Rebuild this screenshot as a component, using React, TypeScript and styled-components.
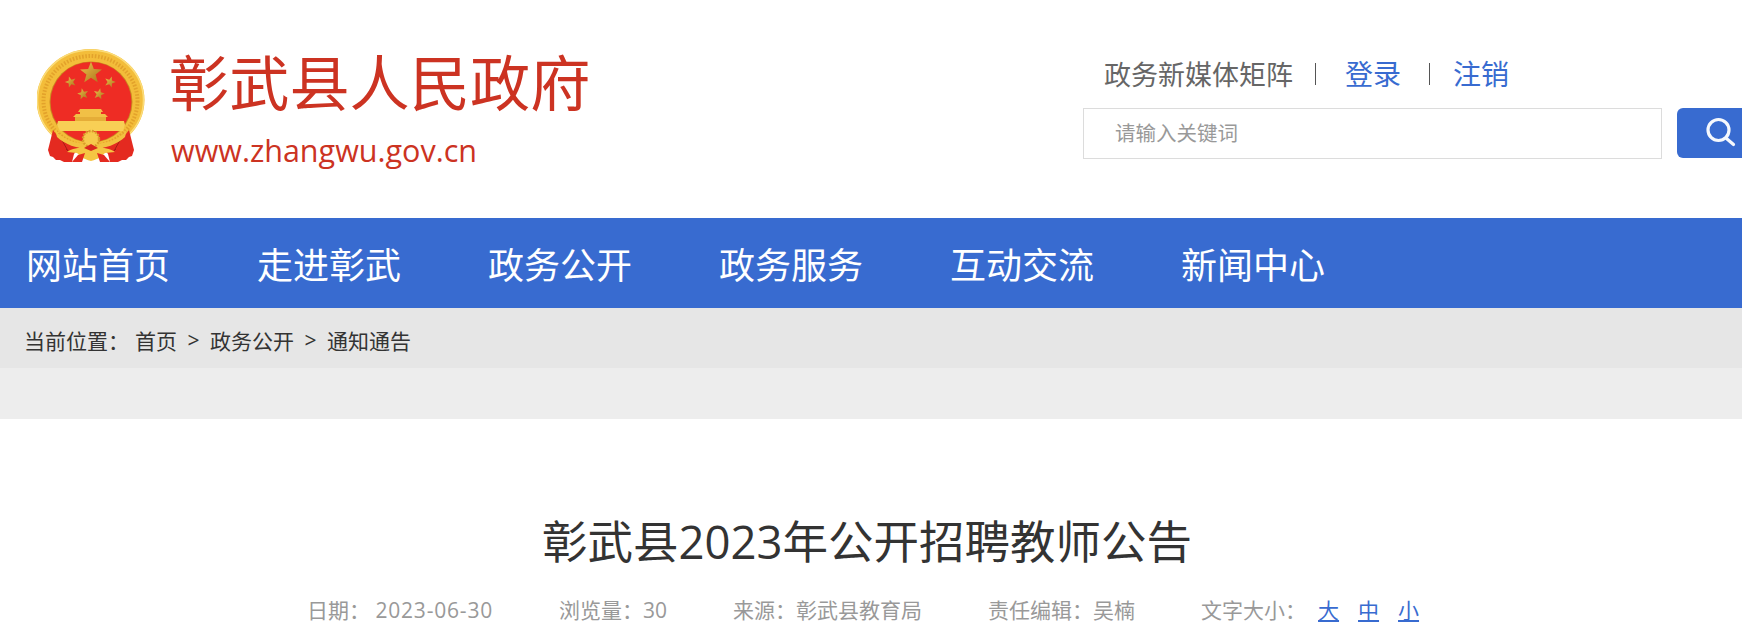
import React from 'react';
import styled, { createGlobalStyle } from 'styled-components';

const CJK = `"Open Sans", "Noto Sans CJK SC", sans-serif`;
const BLUE = '#386bd0';

const GlobalStyle = createGlobalStyle`
  html, body {
    margin: 0;
    padding: 0;
    height: 627px;
    overflow: hidden;
    background: #fff;
    font-family: ${CJK};
  }
`;

const Page = styled.div`
  width: 1742px;
  overflow: hidden;
`;

const Header = styled.header`
  display: flex;
  height: 218px;
`;

const Brand = styled.div`
  flex: 0 0 1083px;
  display: flex;
  align-items: flex-start;
  padding: 48px 0 0 37px;
  box-sizing: border-box;
`;

const Emblem = styled.svg`
  width: 110px;
  height: 116px;
  margin-top: 1px;
  flex: none;
  filter: blur(0.35px);
`;

const BrandText = styled.div`
  margin-left: 23px;
  color: #cc3322;
`;

const SiteName = styled.div`
  font-size: 60.2px;
  line-height: 70px;
  margin-left: -1px;
  white-space: nowrap;
`;

const SiteUrl = styled.div`
  font-size: 30.5px;
  line-height: 42px;
  margin: 11px 0 0 1px;
`;

const Tools = styled.div`
  flex: none;
  padding-top: 52px;
`;

const ToolLinks = styled.div`
  display: flex;
  align-items: center;
  height: 42px;
  padding-left: 21px;
  font-size: 27px;
`;

const ToolLabel = styled.span`
  color: #666;
  white-space: nowrap;
`;

const ToolLink = styled.a`
  color: ${BLUE};
  font-size: 28px;
  white-space: nowrap;
`;

const ToolSep = styled.i<{ $left: number; $right: number }>`
  display: block;
  width: 1px;
  height: 22px;
  margin: 2px ${(p) => p.$right}px 0 ${(p) => p.$left}px;
  background: #555;
`;

const SearchRow = styled.div`
  display: flex;
  margin-top: 14px;
`;

const SearchInput = styled.div`
  width: 579px;
  height: 51px;
  box-sizing: border-box;
  border: 1px solid #dcdcdc;
  padding-left: 31px;
  color: #999;
  font-size: 20.5px;
  line-height: 49px;
`;

const SearchButton = styled.div`
  width: 80px;
  height: 50px;
  margin-left: 15px;
  border-radius: 6px;
  background: ${BLUE};
  display: flex;
  align-items: center;
  padding-left: 28px;
  box-sizing: border-box;
`;

const NavBar = styled.nav`
  display: flex;
  height: 90px;
  align-items: center;
  padding-left: 26px;
  background: ${BLUE};
`;

const NavItem = styled.a`
  width: 231px;
  flex: none;
  color: #fff;
  font-size: 36px;
  white-space: nowrap;
`;

const Crumbs = styled.div`
  display: flex;
  align-items: center;
  height: 60px;
  padding: 3px 0 0 24px;
  box-sizing: border-box;
  background: #e6e6e6;
  color: #333;
  font-size: 21px;
  white-space: nowrap;
`;

const CrumbLabel = styled.span`
  margin-right: 6px;
`;

const CrumbArrow = styled.span`
  margin: 0 10.5px;
`;

const Band = styled.div`
  height: 51px;
  background: #ededed;
`;

const Title = styled.h1`
  margin: 0;
  padding: 90px 8px 0 0;
  text-align: center;
  color: #333;
  font-size: 45.5px;
  font-weight: 400;
  line-height: 64px;
`;

const Meta = styled.div`
  display: flex;
  justify-content: center;
  gap: 66px;
  margin-top: 22px;
  padding-right: 16px;
  color: #999;
  font-size: 21px;
  line-height: 30px;
  white-space: nowrap;
`;

const MetaDate = styled.span`
  letter-spacing: 0.8px;
`;

const SizeLinks = styled.span`
  display: inline-flex;
  gap: 19px;
  margin-left: 12px;
`;

const SizeLink = styled.a`
  color: ${BLUE};
  text-decoration: underline;
`;

const starPoints = (cx: number, cy: number, r: number, turn = 0) =>
  Array.from({ length: 10 }, (_, i) => {
    const a = ((i * 36 + turn - 90) * Math.PI) / 180;
    const d = i % 2 ? r * 0.42 : r;
    return `${(cx + d * Math.cos(a)).toFixed(2)},${(cy + d * Math.sin(a)).toFixed(2)}`;
  }).join(' ');

function NationalEmblem() {
  return (
    <Emblem viewBox="37 49 110 116">
      <defs>
        <linearGradient id="starGold" x1="0" y1="0" x2="1" y2="1">
          <stop offset="0%" stopColor="#f0c04a" />
          <stop offset="100%" stopColor="#a8741c" />
        </linearGradient>
      </defs>
      {/* wheat ring */}
      <ellipse cx="90.5" cy="100" rx="54" ry="51" fill="#f3bd3a" />
      <ellipse cx="90.5" cy="100" rx="53" ry="50" fill="none" stroke="#fbdc78" strokeWidth="1.5" />
      <ellipse cx="90.5" cy="101" rx="47" ry="45" fill="none" stroke="#e3a22b" strokeWidth="4" strokeDasharray="1.6 1.6" />
      <ellipse cx="91" cy="102" rx="41.5" ry="40.5" fill="#c98a20" />
      <ellipse cx="91" cy="102" rx="40.5" ry="40" fill="#ee2c24" />
      {/* stars */}
      <polygon points={starPoints(91, 73, 11.5)} fill="url(#starGold)" />
      <polygon points={starPoints(70.7, 82, 5.8, -18)} fill="url(#starGold)" />
      <polygon points={starPoints(110, 82, 5.8, 18)} fill="url(#starGold)" />
      <polygon points={starPoints(83, 94, 5.8, -12)} fill="url(#starGold)" />
      <polygon points={starPoints(99, 94, 5.8, 12)} fill="url(#starGold)" />
      {/* gate */}
      <path d="M80 109h21l2 3h-2v2h4l3 3h-35l3 -3h4v-2h-2z" fill="#f1c046" />
      <rect x="75" y="117" width="31" height="4" fill="#e5ad38" />
      <path d="M58 121h66l1 4 -2 6H60l-3 -6z" fill="#f8cf55" />
      {/* drapes */}
      <path d="M53 130c6 9 16 14 27 16l-6 8 -2 8h-8l-4 -2 -4 0 -3 -3 -3 -1 -2 -6z" fill="#e42a20" />
      <path d="M129 130c-6 9 -16 14 -27 16l6 8 2 8h8l4 -2 4 0 3 -3 3 -1 2 -6z" fill="#e42a20" />
      <path d="M58 133l10 18 -2 -2" fill="none" stroke="#a81c14" strokeWidth="1" />
      <path d="M124 133l-10 18 2 -2" fill="none" stroke="#a81c14" strokeWidth="1" />
      {/* lower ring arc and gear */}
      <path d="M55 129c6 9 18 15 36 15s30 -6 36 -15l-2 8c-7 7 -20 12 -34 12s-27 -5 -34 -12z" fill="#f2c140" />
      <circle cx="91" cy="139" r="8" fill="#f6ca4c" stroke="#d89c2a" strokeWidth="2.4" strokeDasharray="1.8 1.4" />
      {/* bow */}
      <path d="M67 152c5 -4 12 -4 17 -5l7 1 7 -1c5 1 12 1 17 5l-10 1c-3 3 -6 6 -14 8 -8 -2 -11 -5 -14 -8z" fill="#f5c543" />
      <path d="M84 148l7 -4 7 4 -7 3z" fill="#d8271d" />
      <path d="M72 162l6 -7 7 -2 -3 9z" fill="#e42a20" />
      <path d="M110 162l-6 -7 -7 -2 3 9z" fill="#e42a20" />
    </Emblem>
  );
}

function SearchGlyph() {
  return (
    <svg width="32" height="32" viewBox="0 0 32 32" fill="none" stroke="#f5f8fd" strokeWidth="3.2" strokeLinecap="round">
      <circle cx="13.5" cy="13" r="10.5" />
      <path d="M21.5 21.5l7 6" />
    </svg>
  );
}

const NAV_ITEMS = ['网站首页', '走进彰武', '政务公开', '政务服务', '互动交流', '新闻中心'];

export default function App() {
  return (
    <Page>
      <GlobalStyle />
      <Header>
        <Brand>
          <NationalEmblem />
          <BrandText>
            <SiteName>彰武县人民政府</SiteName>
            <SiteUrl>www.zhangwu.gov.cn</SiteUrl>
          </BrandText>
        </Brand>
        <Tools>
          <ToolLinks>
            <ToolLabel>政务新媒体矩阵</ToolLabel>
            <ToolSep $left={22} $right={29} />
            <ToolLink>登录</ToolLink>
            <ToolSep $left={28} $right={23} />
            <ToolLink>注销</ToolLink>
          </ToolLinks>
          <SearchRow>
            <SearchInput>请输入关键词</SearchInput>
            <SearchButton>
              <SearchGlyph />
            </SearchButton>
          </SearchRow>
        </Tools>
      </Header>
      <NavBar>
        {NAV_ITEMS.map((item) => (
          <NavItem key={item}>{item}</NavItem>
        ))}
      </NavBar>
      <Crumbs>
        <CrumbLabel>当前位置：</CrumbLabel>
        <span>首页</span>
        <CrumbArrow>&gt;</CrumbArrow>
        <span>政务公开</span>
        <CrumbArrow>&gt;</CrumbArrow>
        <span>通知通告</span>
      </Crumbs>
      <Band />
      <Title>彰武县2023年公开招聘教师公告</Title>
      <Meta>
        <span>
          日期：&nbsp;<MetaDate>2023-06-30</MetaDate>
        </span>
        <span>浏览量：30</span>
        <span>来源：彰武县教育局</span>
        <span>责任编辑：吴楠</span>
        <span>
          文字大小：
          <SizeLinks>
            <SizeLink>大</SizeLink>
            <SizeLink>中</SizeLink>
            <SizeLink>小</SizeLink>
          </SizeLinks>
        </span>
      </Meta>
    </Page>
  );
}
